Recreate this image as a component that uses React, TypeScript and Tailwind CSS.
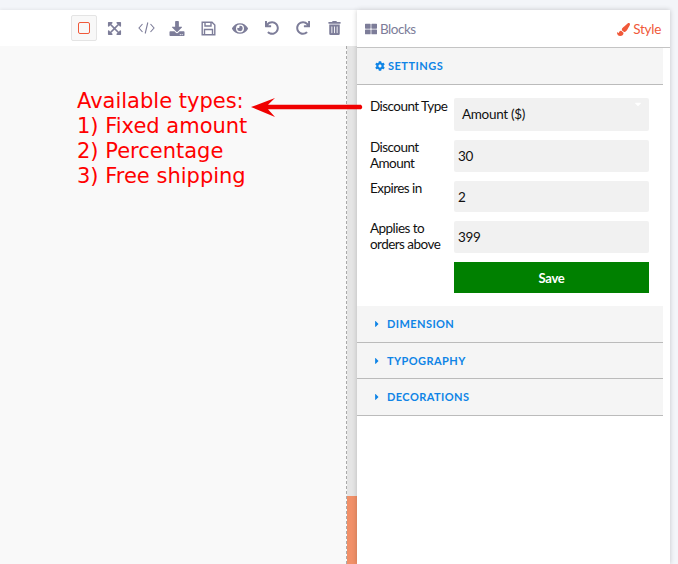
import React from 'react';
import { FaExpandArrowsAlt, FaDownload, FaEye, FaUndo, FaRedo, FaTrashAlt, FaThLarge, FaPaintBrush, FaCog, FaCaretRight, FaCaretDown } from 'react-icons/fa';

const FIELDS = [
  { label: 'Discount Amount', value: '30', h: 'h-[32px]', mt: 'mt-[9px]' },
  { label: 'Expires in', value: '2', h: 'h-[31px]', mt: 'mt-[9px]' },
  { label: 'Applies to orders above', value: '399', h: 'h-[32px]', mt: 'mt-[9px]' },
];

function Section({ title, size }: { title: string; size: string }) {
  return (
    <div className={`${size} bg-[#f5f5f5] border-b border-[#bbbbbb] flex items-center pl-[17px] text-[#0f84e6]`}>
      <FaCaretRight className="w-[6px] h-[10px]" />
      <span className="ml-[7px] text-[11px] font-bold tracking-[0.42px]">{title}</span>
    </div>
  );
}

export default function App() {
  return (
    <div className="relative h-[564px] w-[678px] overflow-hidden bg-[#f3f5f9] pt-[10px] font-['Lato',sans-serif] text-[13.5px] tracking-[-0.3px]">
      <div className="flex h-[554px]">
        {/* Canvas */}
        <div className="w-[357px] flex flex-col">
          <div className="h-[36px] bg-white flex items-center justify-end pr-[16px] shadow-[0_-1px_3px_rgba(0,0,0,0.06)] text-[#7d7d99]">
            <div className="w-[26px] h-[26px] mr-[10px] flex items-center justify-center bg-[#f8f8f8] border border-[#e4e4e4] rounded-[2px]">
              <div className="w-[12px] h-[12px] border border-[#f0593a] rounded-[2px]" />
            </div>
            <FaExpandArrowsAlt className="w-[15px] h-[15px] mr-[16px]" />
            <svg className="w-[17px] h-[14px] mr-[14px]" viewBox="0 0 17 14" fill="none" stroke="currentColor" strokeWidth="1.1">
              <path d="M4.5 3 L1 7 L4.5 11 M12.5 3 L16 7 L12.5 11 M9.8 1.5 L7.2 12.5" />
            </svg>
            <FaDownload className="w-[16px] h-[15px] mr-[16px]" />
            <svg className="w-[15px] h-[15px] mr-[16px]" viewBox="0 0 15 15" fill="none" stroke="currentColor" strokeWidth="1.4">
              <path d="M1.2 1.2 H11 L13.8 4 V13.8 H1.2 Z M4 1.2 V5 H10 V1.2 M3.5 13.8 V8.5 H11.5 V13.8" />
            </svg>
            <FaEye className="w-[16px] h-[15px] mr-[17px]" />
            <FaUndo className="w-[14px] h-[14px] mr-[17px]" />
            <FaRedo className="w-[14px] h-[14px] mr-[18px]" />
            <FaTrashAlt className="w-[13px] h-[14px]" />
          </div>
          <div className="flex-1 flex bg-[#f9f9f9]">
            <div className="flex-1" />
            <div className="w-0 border-l border-dashed border-[#aaaaaa]" />
            <div className="w-[10px] bg-[#e5e5e5] flex flex-col justify-end">
              <div className="h-[68px] bg-[#f19068]" />
            </div>
          </div>
        </div>

        {/* Side panel */}
        <div className="w-[313px] bg-white shadow-[0_0_5px_rgba(0,0,0,0.2)] z-10 flex flex-col">
          <div className="h-[38px] flex items-center justify-between pl-[8px] pr-[9px] pt-[1px] border-b border-[#c4c4c4]">
            <div className="flex items-center gap-[3px] text-[#7d7d99]">
              <FaThLarge className="w-[12px] h-[12px]" />
              <span className="tracking-[-0.5px]">Blocks</span>
            </div>
            <div className="flex items-center gap-[3px] text-[#f0593a]">
              <FaPaintBrush className="w-[13px] h-[13px]" />
              <span>Style</span>
            </div>
          </div>
          <div className="w-[306px] flex-1">
            <div className="h-[37px] bg-[#f5f5f5] border-b border-[#bbbbbb] flex items-center pl-[18px] text-[#0f84e6]">
              <FaCog className="w-[10px] h-[10px]" />
              <span className="ml-[3px] text-[11px] font-bold tracking-[0.5px]">SETTINGS</span>
            </div>
            <div className="pl-[13px] pr-[14px] pt-[13px] pb-[13px] text-[#111] leading-[16px]">
              <div className="flex">
                <div className="w-[84px] whitespace-nowrap tracking-[-0.55px]">Discount Type</div>
                <div className="flex-1 h-[33px] bg-[#f1f1f1] rounded-[2px] relative flex items-center pl-[8px] pb-[2px]">
                  Amount ($)
                  <FaCaretDown className="absolute right-[6px] top-[1px] w-[10px] h-[10px] text-white" />
                </div>
              </div>
              {FIELDS.map((f) => (
                <div key={f.label} className={`flex ${f.mt}`}>
                  <div className="w-[84px] pr-[6px] -mt-[1px] tracking-[-0.55px]">{f.label}</div>
                  <div className={`flex-1 ${f.h} bg-[#f1f1f1] rounded-[2px] flex items-center pl-[4px]`}>{f.value}</div>
                </div>
              ))}
              <div className="flex mt-[9px]">
                <div className="w-[84px]" />
                <button className="flex-1 h-[31px] bg-[#008000] text-white font-bold text-[13px]">Save</button>
              </div>
            </div>
            <Section title="DIMENSION" size="h-[37px]" />
            <Section title="TYPOGRAPHY" size="h-[36px] pt-[1px]" />
            <Section title="DECORATIONS" size="h-[37px]" />
          </div>
        </div>
      </div>

      {/* Annotation */}
      <div className="absolute left-[77px] top-[89px] z-20 font-['DejaVu_Sans',sans-serif] text-[21px] tracking-normal leading-[25px] text-[#ff0000]">
        <div>Available types:</div>
        <div>1) Fixed amount</div>
        <div>2) Percentage</div>
        <div>3) Free shipping</div>
      </div>
      <svg className="absolute left-[250px] top-[96px] z-20 w-[114px] h-[22px]" viewBox="0 0 114 22">
        <path d="M1 11 L25 2 L18 8.7 L111 8.7 Q113.5 11 111 13.3 L18 13.3 L25 21 Z" fill="#f00000" />
      </svg>
    </div>
  );
}
